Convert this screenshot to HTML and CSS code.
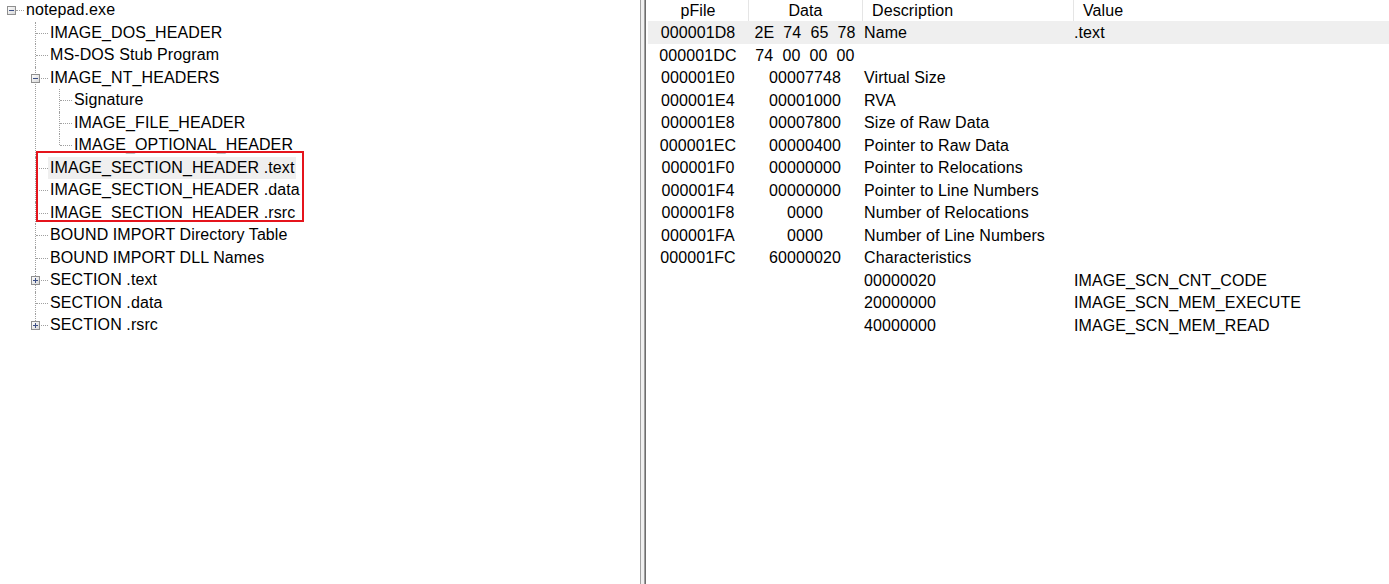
FILE: index.html
```html
<!DOCTYPE html>
<html>
<head>
<meta charset="utf-8">
<link rel="stylesheet" href="styles.css">
</head>
<body>
<div class="app">
  <div class="tree-pane">
    <div class="tree">
      <div class="node">
        <div class="row"><span class="gutter"><svg class="box" width="9" height="9" viewBox="0 0 9 9"><defs><linearGradient id="g" x1="0" y1="0" x2="1" y2="1"><stop offset="0" stop-color="#ffffff"/><stop offset="1" stop-color="#d6d6d6"/></linearGradient></defs><rect x="0.5" y="0.5" width="8" height="8" fill="url(#g)" stroke="#8f8f8f"/><path d="M2 4.5H7" stroke="#3c4f84"/></svg></span><span class="label">notepad.exe</span></div>
        <div class="children">
          <div class="node"><div class="row"><span class="gutter"></span><span class="label">IMAGE_DOS_HEADER</span></div></div>
          <div class="node"><div class="row"><span class="gutter"></span><span class="label">MS-DOS Stub Program</span></div></div>
          <div class="node">
            <div class="row"><span class="gutter"><svg class="box" width="9" height="9" viewBox="0 0 9 9"><rect x="0.5" y="0.5" width="8" height="8" fill="url(#g)" stroke="#8f8f8f"/><path d="M2 4.5H7" stroke="#3c4f84"/></svg></span><span class="label">IMAGE_NT_HEADERS</span></div>
            <div class="children">
              <div class="node"><div class="row"><span class="gutter"></span><span class="label">Signature</span></div></div>
              <div class="node"><div class="row"><span class="gutter"></span><span class="label">IMAGE_FILE_HEADER</span></div></div>
              <div class="node"><div class="row"><span class="gutter"></span><span class="label">IMAGE_OPTIONAL_HEADER</span></div></div>
            </div>
          </div>
          <div class="node"><div class="row"><span class="gutter"></span><span class="label selected">IMAGE_SECTION_HEADER .text</span></div></div>
          <div class="node"><div class="row"><span class="gutter"></span><span class="label">IMAGE_SECTION_HEADER .data</span></div></div>
          <div class="node"><div class="row"><span class="gutter"></span><span class="label">IMAGE_SECTION_HEADER .rsrc</span></div></div>
          <div class="node"><div class="row"><span class="gutter"></span><span class="label">BOUND IMPORT Directory Table</span></div></div>
          <div class="node"><div class="row"><span class="gutter"></span><span class="label">BOUND IMPORT DLL Names</span></div></div>
          <div class="node"><div class="row"><span class="gutter"><svg class="box" width="9" height="9" viewBox="0 0 9 9"><rect x="0.5" y="0.5" width="8" height="8" fill="url(#g)" stroke="#8f8f8f"/><path d="M2 4.5H7M4.5 2V7" stroke="#3c4f84"/></svg></span><span class="label">SECTION .text</span></div></div>
          <div class="node"><div class="row"><span class="gutter"></span><span class="label">SECTION .data</span></div></div>
          <div class="node"><div class="row"><span class="gutter"><svg class="box" width="9" height="9" viewBox="0 0 9 9"><rect x="0.5" y="0.5" width="8" height="8" fill="url(#g)" stroke="#8f8f8f"/><path d="M2 4.5H7M4.5 2V7" stroke="#3c4f84"/></svg></span><span class="label">SECTION .rsrc</span></div></div>
        </div>
      </div>
    </div>
    <div class="annotation"></div>
  </div>
  <div class="splitter"></div>
  <div class="list-pane">
    <div class="list-header">
      <div class="hcell c-center">pFile</div>
      <div class="hcell c-center sep">Data</div>
      <div class="hcell c-left sep">Description</div>
      <div class="hcell c-left sep">Value</div>
    </div>
    <div class="list-row sel">
      <div class="cell c-center">000001D8</div>
      <div class="cell c-center">2E  74  65  78</div>
      <div class="cell desc">Name</div>
      <div class="cell val">.text</div>
    </div>
    <div class="list-row">
      <div class="cell c-center">000001DC</div>
      <div class="cell c-center">74  00  00  00</div>
      <div class="cell desc"></div>
      <div class="cell val"></div>
    </div>
    <div class="list-row">
      <div class="cell c-center">000001E0</div>
      <div class="cell c-center">00007748</div>
      <div class="cell desc">Virtual Size</div>
      <div class="cell val"></div>
    </div>
    <div class="list-row">
      <div class="cell c-center">000001E4</div>
      <div class="cell c-center">00001000</div>
      <div class="cell desc">RVA</div>
      <div class="cell val"></div>
    </div>
    <div class="list-row">
      <div class="cell c-center">000001E8</div>
      <div class="cell c-center">00007800</div>
      <div class="cell desc">Size of Raw Data</div>
      <div class="cell val"></div>
    </div>
    <div class="list-row">
      <div class="cell c-center">000001EC</div>
      <div class="cell c-center">00000400</div>
      <div class="cell desc">Pointer to Raw Data</div>
      <div class="cell val"></div>
    </div>
    <div class="list-row">
      <div class="cell c-center">000001F0</div>
      <div class="cell c-center">00000000</div>
      <div class="cell desc">Pointer to Relocations</div>
      <div class="cell val"></div>
    </div>
    <div class="list-row">
      <div class="cell c-center">000001F4</div>
      <div class="cell c-center">00000000</div>
      <div class="cell desc">Pointer to Line Numbers</div>
      <div class="cell val"></div>
    </div>
    <div class="list-row">
      <div class="cell c-center">000001F8</div>
      <div class="cell c-center">0000</div>
      <div class="cell desc">Number of Relocations</div>
      <div class="cell val"></div>
    </div>
    <div class="list-row">
      <div class="cell c-center">000001FA</div>
      <div class="cell c-center">0000</div>
      <div class="cell desc">Number of Line Numbers</div>
      <div class="cell val"></div>
    </div>
    <div class="list-row">
      <div class="cell c-center">000001FC</div>
      <div class="cell c-center">60000020</div>
      <div class="cell desc">Characteristics</div>
      <div class="cell val"></div>
    </div>
    <div class="list-row">
      <div class="cell c-center"></div>
      <div class="cell c-center"></div>
      <div class="cell desc">00000020</div>
      <div class="cell val">IMAGE_SCN_CNT_CODE</div>
    </div>
    <div class="list-row">
      <div class="cell c-center"></div>
      <div class="cell c-center"></div>
      <div class="cell desc">20000000</div>
      <div class="cell val">IMAGE_SCN_MEM_EXECUTE</div>
    </div>
    <div class="list-row">
      <div class="cell c-center"></div>
      <div class="cell c-center"></div>
      <div class="cell desc">40000000</div>
      <div class="cell val">IMAGE_SCN_MEM_READ</div>
    </div>
  </div>
</div>
</body>
</html>
```

FILE: styles.css
```css
html, body {
  margin: 0;
  padding: 0;
  background: #ffffff;
}
body {
  font-family: "Liberation Sans", Arial, sans-serif;
  font-size: 16px;
  letter-spacing: 0.1px;
  color: #000000;
  overflow: hidden;
}
.app {
  display: flex;
  width: 1389px;
  height: 584px;
}
.tree-pane {
  width: 640px;
  flex: none;
  position: relative;
  overflow: hidden;
}
.tree {
  margin-top: -1px;
}
.node {
  position: relative;
}
.children {
  padding-left: 24px;
}
.row {
  display: flex;
  align-items: center;
  height: 22.5px;
}
.gutter {
  width: 24px;
  height: 100%;
  flex: none;
  position: relative;
}
.children > .node::before {
  content: "";
  position: absolute;
  left: 11px;
  top: 0;
  bottom: 0;
  border-left: 1px dotted #a0a0a0;
}
.children > .node:last-child::before {
  bottom: auto;
  height: 11px;
}
.children .gutter::after {
  content: "";
  position: absolute;
  left: 12px;
  right: 0;
  top: 11px;
  border-top: 1px dotted #a0a0a0;
}
.tree > .node > .row .gutter::after {
  content: "";
  position: absolute;
  left: 16px;
  right: 0;
  top: 11px;
  border-top: 1px dotted #a0a0a0;
}
.box {
  position: absolute;
  left: 7px;
  top: 7px;
  z-index: 1;
  display: block;
}
.label {
  padding: 0 2px;
  height: 22px;
  line-height: 22px;
  white-space: nowrap;
}
.label.selected {
  background: #efefef;
}
.annotation {
  position: absolute;
  left: 36px;
  top: 151px;
  width: 264px;
  height: 67px;
  border: 2px solid #e5141c;
  pointer-events: none;
}
.splitter {
  width: 8px;
  flex: none;
  background: linear-gradient(to right,
    #a0a0a0 0, #a0a0a0 1px,
    #f0f0f0 1px, #f0f0f0 4px,
    #a0a0a0 4px, #a0a0a0 5px,
    #6d6d6d 5px, #6d6d6d 6px,
    #ffffff 6px, #ffffff 8px);
}
.list-pane {
  flex: 1;
  display: flex;
  flex-direction: column;
  overflow: hidden;
}
.list-header,
.list-row {
  display: grid;
  grid-template-columns: 100px 114px 211px 1fr;
}
.list-header {
  height: 21px;
}
.hcell {
  line-height: 21px;
  white-space: nowrap;
}
.hcell.sep {
  border-left: 1px solid #e5e5e5;
}
.hcell.c-left {
  padding-left: 9px;
}
.list-row {
  height: 22.5px;
}
.list-row.sel {
  background: #efefef;
}
.cell {
  line-height: 24.5px;
  white-space: pre;
}
.c-center {
  text-align: center;
}
.desc {
  padding-left: 2px;
}
.val {
  padding-left: 1px;
}
```
